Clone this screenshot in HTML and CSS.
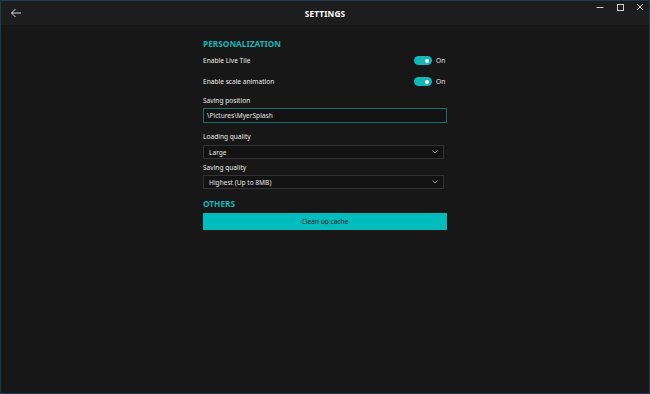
FILE: index.html
```html
<!DOCTYPE html>
<html lang="en">
<head>
    <meta charset="UTF-8">
    <title>Settings</title>
    <link rel="stylesheet" href="styles.css">
</head>
<body>
    <div class="window">
        <div class="titlebar">
            <div class="back">
                <svg width="12" height="10" viewBox="0 0 12 10"><path d="M11 5H1.5M5.5 1L1.5 5L5.5 9" fill="none" stroke="#d8d8d8" stroke-width="1"/></svg>
            </div>
            <div class="title">SETTINGS</div>
            <div class="controls">
                <svg width="8" height="8" viewBox="0 0 8 8"><path d="M0.5 4.5H7.5" stroke="#cfcfcf" stroke-width="1"/></svg>
                <svg width="8" height="8" viewBox="0 0 8 8"><rect x="1.5" y="1.5" width="6" height="6" fill="none" stroke="#cfcfcf" stroke-width="1"/></svg>
                <svg width="8" height="8" viewBox="0 0 8 8"><path d="M1 1L7 7M7 1L1 7" stroke="#cfcfcf" stroke-width="1"/></svg>
            </div>
        </div>
        <div class="content">
            <div class="section">
                <h2 class="heading">PERSONALIZATION</h2>
                <div class="row">
                    <span class="label">Enable Live Tile</span>
                    <span class="toggle-wrap"><span class="toggle"><span class="knob"></span></span>On</span>
                </div>
                <div class="row">
                    <span class="label">Enable scale animation</span>
                    <span class="toggle-wrap"><span class="toggle"><span class="knob"></span></span>On</span>
                </div>
                <div class="label field-label">Saving position</div>
                <div class="textbox">\Pictures\MyerSplash</div>
                <div class="label field-label combo-label">Loading quality</div>
                <div class="combo">
                    <span>Large</span>
                    <svg width="6" height="4" viewBox="0 0 6 4"><path d="M0.5 0.5L3 3L5.5 0.5" fill="none" stroke="#a8a8a8" stroke-width="0.9"/></svg>
                </div>
                <div class="label field-label small-gap">Saving quality</div>
                <div class="combo">
                    <span>Highest (Up to 8MB)</span>
                    <svg width="6" height="4" viewBox="0 0 6 4"><path d="M0.5 0.5L3 3L5.5 0.5" fill="none" stroke="#a8a8a8" stroke-width="0.9"/></svg>
                </div>
            </div>
            <div class="section">
                <h2 class="heading">OTHERS</h2>
                <div class="button">Clean up cache</div>
            </div>
        </div>
    </div>
</body>
</html>
```

FILE: styles.css
```css
html, body {
    margin: 0;
    padding: 0;
    background: #171717;
}
.window {
    width: 650px;
    height: 394px;
    box-sizing: border-box;
    border: 1px solid #1d3a52;
    background: #171717;
    font-family: "Noto Sans", "Liberation Sans", sans-serif;
    color: #e6e6e6;
}
.titlebar {
    height: 24px;
    background: #1d1d1d;
    display: grid;
    grid-template-columns: 70px 1fr 70px;
    align-items: center;
}
.back {
    display: flex;
    padding-left: 9px;
}
.title {
    text-align: center;
    font-size: 8.3px;
    font-weight: bold;
    color: #ffffff;
    letter-spacing: 0.1px;
}
.controls {
    align-self: start;
    padding-top: 2px;
    display: flex;
    justify-content: flex-end;
    gap: 12px;
    padding-right: 5px;
}

.content {
    width: 244px;
    margin: 0 auto;
    padding-top: 13px;
}
.heading {
    margin: 0;
    height: 12px;
    line-height: 12px;
    font-size: 8.3px;
    font-weight: bold;
    color: #19b3b6;
}
.row {
    display: flex;
    justify-content: space-between;
    align-items: center;
    height: 21px;
}
.label {
    font-size: 6.6px;
    color: #ececec;
}
.toggle-wrap {
    display: flex;
    align-items: center;
    gap: 4px;
    font-size: 6.6px;
    width: 33px;
}
.toggle {
    width: 18px;
    height: 9px;
    border-radius: 5px;
    background: #14b6b8;
    position: relative;
}
.knob {
    position: absolute;
    right: 3px;
    top: 2.5px;
    width: 4px;
    height: 4px;
    border-radius: 50%;
    background: #ffffff;
}
.field-label {
    height: 9px;
    line-height: 9px;
    margin-top: 4px;
    margin-bottom: 3px;
}
.combo-label {
    margin-top: 8.5px;
    margin-bottom: 4.5px;
}
.small-gap {
    margin-top: 3.5px;
    margin-bottom: 3.5px;
}
.textbox {
    height: 15px;
    box-sizing: border-box;
    border: 1px solid #1d6d6d;
    background: #121212;
    font-size: 6.6px;
    padding-left: 3px;
    display: flex;
    align-items: center;
}
.combo {
    width: 241px;
    height: 14px;
    box-sizing: border-box;
    border: 1px solid #333333;
    background: #121212;
    font-size: 6.6px;
    padding: 0 5px;
    display: flex;
    justify-content: space-between;
    align-items: center;
}
.section + .section {
    margin-top: 9px;
}
.section + .section .heading {
    margin-bottom: 3px;
}
.button {
    height: 17px;
    background: #00bcbd;
    color: #1a1a1a;
    font-size: 6.6px;
    display: flex;
    justify-content: center;
    align-items: center;
}
```
